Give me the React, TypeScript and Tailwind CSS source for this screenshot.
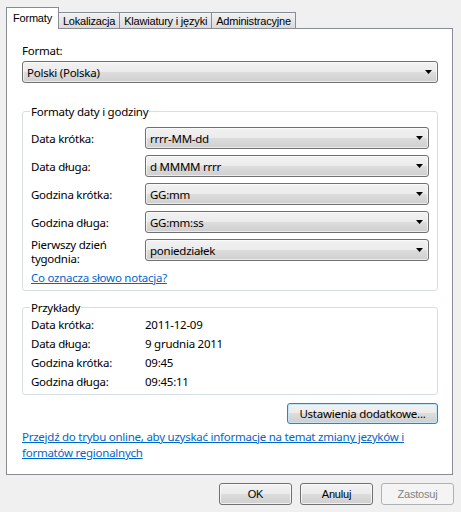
import React from 'react';

const segoe = "font-['Segoe_UI','Noto_Sans',sans-serif] text-[11.5px] tracking-[-0.25px]";
const tahoma = "font-['Tahoma','Liberation_Sans',sans-serif] text-[11px] tracking-[-0.2px]";

function Arrow() {
  return (
    <svg width="7" height="4" viewBox="0 0 7 4" className="shrink-0">
      <path d="M0 0h7L3.5 4z" fill="#000" />
    </svg>
  );
}

function Combo({ value, className = '' }: { value: string; className?: string }) {
  return (
    <div
      className={`flex h-[22px] shrink-0 items-center justify-between rounded-[3px] border border-[#707070] bg-[linear-gradient(#f2f2f2_0%,#ebebeb_50%,#dddddd_50%,#cfcfcf_100%)] pl-[4px] pr-[5px] shadow-[inset_0_0_0_1px_rgba(255,255,255,0.6)] ${className}`}
    >
      <span className="leading-[15px] text-black">{value}</span>
      <Arrow />
    </div>
  );
}

function Tab({ label, active }: { label: string; active?: boolean }) {
  if (active) {
    return (
      <div className="relative z-10 -mb-px flex h-[22px] items-start border border-b-0 border-[#898c95] bg-white px-[6px] pt-[3px] text-black">
        <span className="leading-[14px]">{label}</span>
      </div>
    );
  }
  return (
    <div className="flex h-[16px] items-start border border-b-0 border-l-0 border-[#898c95] bg-[linear-gradient(#f2f2f2,#dbdbdb)] px-[4px] pt-[1px] text-black">
      <span className="leading-[14px]">{label}</span>
    </div>
  );
}

const dateRows = [
  { label: 'Data krótka:', value: 'rrrr-MM-dd' },
  { label: 'Data długa:', value: 'd MMMM rrrr' },
  { label: 'Godzina krótka:', value: 'GG:mm' },
  { label: 'Godzina długa:', value: 'GG:mm:ss' },
];

const examples = [
  { label: 'Data krótka:', value: '2011-12-09' },
  { label: 'Data długa:', value: '9 grudnia 2011' },
  { label: 'Godzina krótka:', value: '09:45' },
  { label: 'Godzina długa:', value: '09:45:11' },
];

const btnGradient =
  'bg-[linear-gradient(#f2f2f2_0%,#ebebeb_50%,#dddddd_50%,#cfcfcf_100%)] shadow-[inset_0_0_0_1px_rgba(255,255,255,0.7)]';

export default function App() {
  return (
    <div className={`h-[512px] w-[461px] bg-[#f0f0f0] ${segoe} text-black`}>
      <div className={`flex items-end pl-[6px] pt-[7px] ${tahoma}`}>
        <Tab label="Formaty" active />
        <Tab label="Lokalizacja" />
        <Tab label="Klawiatury i języki" />
        <Tab label="Administracyjne" />
      </div>

      <div className="ml-[6px] h-[447px] w-[447px] border border-[#898c95] bg-white px-[15px]">
        <div className="pt-[14px] leading-[15px]">Format:</div>
        <Combo value="Polski (Polska)" className="mt-[3px] w-[416px]" />

        <fieldset className="mt-[21px] w-[416px] rounded-[3px] border border-[#d5dfe5] px-[8px] pb-[5px]">
          <legend className="-ml-[1px] px-[1px] leading-[15px]">Formaty daty i godziny</legend>
          <div className="mt-[8px] flex flex-col gap-[6px]">
            {dateRows.map((r) => (
              <div key={r.label} className="flex items-center">
                <div className="w-[114px] leading-[15px]">{r.label}</div>
                <Combo value={r.value} className="w-[284px]" />
              </div>
            ))}
            <div className="flex items-start">
              <div className="-mt-[1px] w-[114px] leading-[14px]">
                Pierwszy dzień
                <br />
                tygodnia:
              </div>
              <Combo value="poniedziałek" className="w-[284px]" />
            </div>
          </div>
          <div className="mt-[4px] leading-[15px] text-[#0066cc] underline">Co oznacza słowo notacja?</div>
        </fieldset>

        <fieldset className="mt-[9px] w-[416px] rounded-[3px] border border-[#d5dfe5] px-[8px] pb-[3px]">
          <legend className="-ml-[1px] px-[1px] leading-[15px]">Przykłady</legend>
          {examples.map((r) => (
            <div key={r.label} className="flex leading-[19px]">
              <div className="w-[114px]">{r.label}</div>
              <div>{r.value}</div>
            </div>
          ))}
        </fieldset>

        <div className="mt-[8px] flex w-[416px] justify-end">
          <div className="flex h-[21px] w-[151px] items-center justify-center rounded-[3px] border border-[#3c7fb1] bg-[linear-gradient(#f2f2f2_0%,#ebebeb_50%,#dddddd_50%,#cfcfcf_100%)] shadow-[inset_0_0_0_1px_#c4e5f6]">
            <span className="leading-[15px]">Ustawienia dodatkowe...</span>
          </div>
        </div>

        <div className="mt-[5px] whitespace-nowrap leading-[16px] text-[#0066cc] underline">
          Przejdź do trybu online, aby uzyskać informacje na temat zmiany jezyków i
          <br />
          formatów regionalnych
        </div>
      </div>

      <div className={`mt-[8px] flex justify-end gap-[8px] pr-[7px] ${tahoma}`}>
        <div className={`flex h-[22px] w-[73px] items-center justify-center rounded-[3px] border border-[#707070] ${btnGradient}`}>
          OK
        </div>
        <div className={`flex h-[22px] w-[73px] items-center justify-center rounded-[3px] border border-[#707070] ${btnGradient}`}>
          Anuluj
        </div>
        <div className="flex h-[22px] w-[73px] items-center justify-center rounded-[3px] border border-[#adb2b5] bg-[#f4f4f4] text-[#838383]">
          Zastosuj
        </div>
      </div>
    </div>
  );
}
